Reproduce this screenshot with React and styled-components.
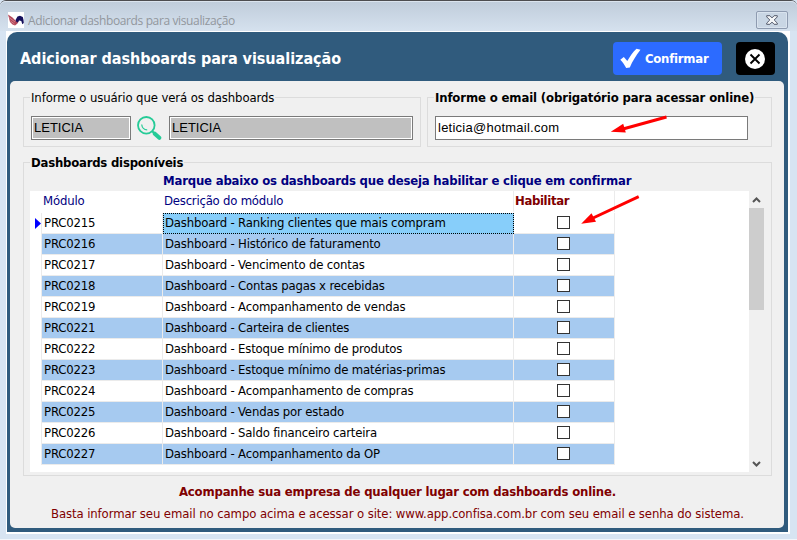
import React from 'react';
import styled, { createGlobalStyle } from 'styled-components';

const UI_FONT = '"DejaVu Sans Condensed", "DejaVu Sans", sans-serif';

const GlobalStyle = createGlobalStyle`
  * { box-sizing: border-box; }
  body { margin: 0; overflow: hidden; background: #d7e4f2; }
`;

const Window = styled.div`
  position: relative;
  display: flex;
  flex-direction: column;
  width: 797px;
  height: 540px;
  background: #d7e4f2;
  border-top: 1px solid #4d4d50;
  border-bottom: 1px solid #f2f6fb;
  border-radius: 6px 6px 0 0;
  font: 13px ${UI_FONT};
  color: #000;
`;

const TitleBar = styled.header`
  display: flex;
  align-items: center;
  height: 30px;
  padding: 7px 9px 0 8px;
  background: linear-gradient(#c0cddb, #d5e1ee);
  border-top: 1px solid #dbe4ee;
  border-radius: 6px 6px 0 0;
`;

const Caption = styled.span`
  flex: 1;
  margin-left: 4px;
  padding-top: 1px;
  font: 12px/18px "Open Sans", "Noto Sans", sans-serif;
  letter-spacing: -0.37px;
  color: #92979d;
`;

const CloseBox = styled.button`
  display: flex;
  align-items: center;
  justify-content: center;
  width: 32px;
  height: 18px;
  margin-top: -1px;
  padding: 0;
  background: #c9d6e4;
  border: 1px solid #8e9bb0;
  border-radius: 2px;
  box-shadow: inset 0 0 0 1px #d9e3ee;
`;

const Frame = styled.main`
  width: 784px;
  height: 503px;
  margin-left: 6px;
  background: #fff;
  border: solid #fff;
  border-width: 1px 2px 2px 1px;
`;

const Shell = styled.div`
  display: flex;
  flex-direction: column;
  width: 781px;
  height: 500px;
  padding: 0 4px 4px 3px;
  background: #305b7d;
  border-radius: 10px 10px 0 0;
`;

const Heading = styled.div`
  display: flex;
  align-items: center;
  height: 49px;
  padding: 5px 10px 0;
`;

const Title = styled.h1`
  flex: 1;
  margin: 0;
  font: bold 16px/22px ${UI_FONT};
  letter-spacing: -0.03px;
  color: #fff;
`;

const ConfirmButton = styled.button`
  display: flex;
  align-items: center;
  width: 109px;
  height: 33px;
  margin: -1px 14px 0 0;
  padding: 0 0 0 7px;
  gap: 4px;
  border: 0;
  border-radius: 4px;
  background: #2c6bff;
  color: #fff;
  font: bold 13px ${UI_FONT};
  letter-spacing: -0.25px;
`;

const CancelButton = styled.button`
  display: flex;
  align-items: center;
  justify-content: center;
  width: 39px;
  height: 33px;
  margin: -1px -1px 0 0;
  padding: 0 1px 0 0;
  border: 0;
  border-radius: 4px;
  background: #000;
`;

const Panel = styled.div`
  flex: 1;
  display: flex;
  flex-direction: column;
  padding: 16px 12px 0 13px;
  background: #f0f0f0;
  border-radius: 5px;
`;

const GroupRow = styled.div`
  display: flex;
  justify-content: space-between;
`;

const Group = styled.section`
  width: ${(p) => p.$width}px;
  height: ${(p) => p.$height}px;
  border: 1px solid #dcdcdc;
`;

const Legend = styled.div`
  width: max-content;
  margin: -8px 0 0 6px;
  padding: 0 1px;
  background: #f0f0f0;
  font-weight: ${(p) => (p.$bold ? 'bold' : 'normal')};
  line-height: 16px;
  letter-spacing: ${(p) => p.$track}px;
  white-space: nowrap;
`;

const Fields = styled.div`
  display: flex;
  align-items: center;
  height: 24px;
  margin: 10px 0 0 7px;
`;

const Input = styled.div`
  width: ${(p) => p.$width}px;
  height: 24px;
  padding-left: 2px;
  border: 1px solid #7a7a7a;
  background: ${(p) => (p.$locked ? '#c0c0c0' : '#fff')};
  box-shadow: inset 0 0 0 1px #fff;
  font: 13px/21px "Liberation Sans", Arial, sans-serif;
  letter-spacing: ${(p) => p.$track || 0}px;
`;

const SearchIcon = styled.svg`
  margin: 0 7px 0 6px;
`;

const ListGroup = styled(Group)`
  margin-top: 15px;
`;

const Instruction = styled.p`
  margin: 1px 0 0 139px;
  font-weight: bold;
  line-height: 18px;
  letter-spacing: -0.19px;
  color: #000080;
  white-space: nowrap;
`;

const Grid = styled.div`
  display: flex;
  width: 734px;
  height: 281px;
  margin: 1px 0 0 6px;
  background: #fff;
`;

const Rows = styled.div`
  width: 584px;
`;

const Row = styled.div`
  display: grid;
  grid-template-columns: 12px 121px 351px 101px;
  height: 21px;
`;

const HeaderRow = styled(Row)`
  height: 22px;
  padding-bottom: 1px;
`;

const Cell = styled.div`
  padding-left: 2px;
  border-right: 1px solid #ebebeb;
  border-bottom: 1px solid #ebebeb;
  background: ${(p) => (p.$striped ? '#a6caf0' : '#fff')};
  line-height: 20px;
  letter-spacing: ${(p) => p.$track || 0}px;
  white-space: nowrap;
`;

const HeaderCell = styled(Cell)`
  border-bottom: 0;
  border-right-color: ${(p) => (p.$divided ? '#ebebeb' : 'transparent')};
  padding-left: 1px;
  color: ${(p) => p.$color || '#000080'};
  font-weight: ${(p) => (p.$color ? 'bold' : 'normal')};
`;

const SelectedCell = styled(Cell)`
  padding-left: 1px;
  line-height: 18px;
  background: #87cefa;
  border: 1px dotted #000;
`;

const CheckCell = styled(Cell)`
  display: flex;
  justify-content: center;
  padding: 3px 2px 0 0;
`;

const CheckBox = styled.span`
  width: 13px;
  height: 13px;
  border: 1px solid #333;
  background: #fff;
`;

const Gutter = styled.div`
  display: flex;
  align-items: center;
  padding-left: 5px;
  border-right: 1px solid #ebebeb;
`;

const HeaderGutter = styled.div``;

const ScrollBar = styled.div`
  display: flex;
  flex-direction: column;
  align-items: center;
  width: 15px;
  margin-left: auto;
  background: #f0f0f0;
`;

const Thumb = styled.div`
  width: 15px;
  height: 102px;
  background: #cdcdcd;
`;

const Spacer = styled.div`
  flex: 1;
`;

const Promo = styled.p`
  margin: 6px 0 0 156px;
  font-weight: bold;
  line-height: 20px;
  letter-spacing: -0.19px;
  color: #800000;
  white-space: nowrap;
`;

const Hint = styled.p`
  margin: 3px 0 0 28px;
  line-height: 18px;
  letter-spacing: -0.1px;
  color: #800000;
  white-space: nowrap;
`;

const Arrow = styled.svg`
  position: absolute;
  left: ${(p) => p.$x}px;
  top: ${(p) => p.$y}px;
  pointer-events: none;
`;

const modules = [
  ['PRC0215', 'Ranking clientes que mais compram'],
  ['PRC0216', 'Histórico de faturamento'],
  ['PRC0217', 'Vencimento de contas'],
  ['PRC0218', 'Contas pagas x recebidas'],
  ['PRC0219', 'Acompanhamento de vendas'],
  ['PRC0221', 'Carteira de clientes'],
  ['PRC0222', 'Estoque mínimo de produtos'],
  ['PRC0223', 'Estoque mínimo de matérias-primas'],
  ['PRC0224', 'Acompanhamento de compras'],
  ['PRC0225', 'Vendas por estado'],
  ['PRC0226', 'Saldo financeiro carteira'],
  ['PRC0227', 'Acompanhamento da OP'],
];

function Logo() {
  return (
    <svg width="16" height="16" viewBox="0 0 16 16">
      <path fill="#fff" d="M0 0h16v16H0z" />
      <path fill="#b5485a" d="M0 2.500 4.500 5.500 7.500 8.500 10.500 9 9.500 11.500 7 13.500 4.500 12.500 2 10z" />
      <path stroke="#e9b9bf" strokeWidth=".5" fill="none" d="M1 5.500 7 10M2.500 9l4 3" />
      <path fill="#15105c" d="M7.500 8 9.500 4.500 12 3.800 14.800 5 15.500 8 15.800 11 14.300 12.300 13.300 9 11 8.500 10 10.500 8.500 10z" />
    </svg>
  );
}

export default function App() {
  return (
    <>
      <GlobalStyle />
      <Window>
        <TitleBar>
          <Logo />
          <Caption>Adicionar dashboards para visualização</Caption>
          <CloseBox aria-label="Fechar">
            <svg width="12" height="10" viewBox="0 0 12 10">
              <path
                d="M.7.700h3.200L6 2.900 8.100.700h3.200v1.200L8.200 5l3.100 3.100v1.200H8.100L6 7.100 3.900 9.300H.7V8.100L3.800 5 .7 1.900z"
                fill="#f4f6f8" stroke="#53596a" strokeWidth="1"
              />
            </svg>
          </CloseBox>
        </TitleBar>
        <Frame>
          <Shell>
            <Heading>
              <Title>Adicionar dashboards para visualização</Title>
              <ConfirmButton>
                <svg width="21" height="21" viewBox="0 0 21 21">
                  <path d="M.3 11.800 3.800 9l3.500 4C10 8.500 12.500 4 16.500.700L20.500 1.700C16 7.500 12.500 13 9.800 19.400L6.200 20C4.500 16.800 2.600 14.200.3 11.800z" fill="#fff" />
                </svg>
                Confirmar
              </ConfirmButton>
              <CancelButton aria-label="Cancelar">
                <svg width="20" height="20" viewBox="0 0 20 20">
                  <circle cx="10" cy="10" r="10" fill="#fff" />
                  <path d="m5.500 5.500 9 9m0-9-9 9" stroke="#000" strokeWidth="1.900" />
                </svg>
              </CancelButton>
            </Heading>
            <Panel>
              <GroupRow>
                <Group $width={398} $height={50}>
                  <Legend $track={-0.1}>Informe o usuário que verá os dashboards</Legend>
                  <Fields>
                    <Input $width={100} $locked>LETICIA</Input>
                    <SearchIcon width="25" height="25" viewBox="0 0 25 25" fill="none" stroke="#25cb97">
                      <circle cx="9.300" cy="9.300" r="8.300" strokeWidth="1.800" />
                      <path d="M4.700 8.500c.4 3.400 2.600 5.300 5.500 5.300" strokeWidth="1.200" />
                      <path d="m15.300 15.300 2 2" strokeWidth="2" />
                      <path d="m17.800 17.700 4.500 4.100" strokeWidth="4" strokeLinecap="round" />
                    </SearchIcon>
                    <Input $width={244} $locked>LETICIA</Input>
                  </Fields>
                </Group>
                <Group $width={345} $height={50}>
                  <Legend $bold $track={-0.13}>Informe o email (obrigatório para acessar online)</Legend>
                  <Fields>
                    <Input $width={313} $track={0.25}>leticia@hotmail.com</Input>
                  </Fields>
                </Group>
              </GroupRow>
              <ListGroup $width={749} $height={314}>
                <Legend $bold $track={-0.22}>Dashboards disponíveis</Legend>
                <Instruction>Marque abaixo os dashboards que deseja habilitar e clique em confirmar</Instruction>
                <Grid>
                  <Rows>
                    <HeaderRow>
                      <HeaderGutter />
                      <HeaderCell $track={-0.15}>Módulo</HeaderCell>
                      <HeaderCell $divided $track={-0.22}>Descrição do módulo</HeaderCell>
                      <HeaderCell $divided $color="#800000" $track={-0.36}>Habilitar</HeaderCell>
                    </HeaderRow>
                    {modules.map(([code, name], i) => {
                      const DescriptionCell = i === 0 ? SelectedCell : Cell;
                      const striped = i % 2 === 1;
                      return (
                        <Row key={code}>
                          <Gutter>
                            {i === 0 && (
                              <svg width="6" height="11" viewBox="0 0 6 11">
                                <path d="M0 0 6 5.500 0 11z" fill="#00f" />
                              </svg>
                            )}
                          </Gutter>
                          <Cell $striped={striped} $track={-0.15}>{code}</Cell>
                          <DescriptionCell $striped={striped} $track={-0.17}>Dashboard - {name}</DescriptionCell>
                          <CheckCell $striped={striped}><CheckBox /></CheckCell>
                        </Row>
                      );
                    })}
                  </Rows>
                  <ScrollBar>
                    <svg width="15" height="17" viewBox="0 0 15 17" fill="none">
                      <path d="m4 11 3.500-3.500L11 11" stroke="#555" strokeWidth="2" />
                    </svg>
                    <Thumb />
                    <Spacer />
                    <svg width="15" height="17" viewBox="0 0 15 17" fill="none">
                      <path d="m4 7 3.500 3.500L11 7" stroke="#555" strokeWidth="2" />
                    </svg>
                  </ScrollBar>
                </Grid>
              </ListGroup>
              <Promo>Acompanhe sua empresa de qualquer lugar com dashboards online.</Promo>
              <Hint>Basta informar seu email no campo acima e acessar o site: www.app.confisa.com.br com seu email e senha do sistema.</Hint>
            </Panel>
          </Shell>
        </Frame>
        <Arrow $x={610} $y={113} width="60" height="22" viewBox="0 0 60 22">
          <path d="M56.500 3 12 15.200" stroke="#f00" strokeWidth="3" />
          <path d="M.8 17.700 13.200 9.800 15.800 18.500z" fill="#f00" />
        </Arrow>
        <Arrow $x={580} $y={193} width="60" height="32" viewBox="0 0 60 32">
          <path d="M58.700 2.700 12 24.500" stroke="#f00" strokeWidth="3" />
          <path d="M1.200 29.800 11.500 19.300 16 27.800z" fill="#f00" />
        </Arrow>
      </Window>
    </>
  );
}
